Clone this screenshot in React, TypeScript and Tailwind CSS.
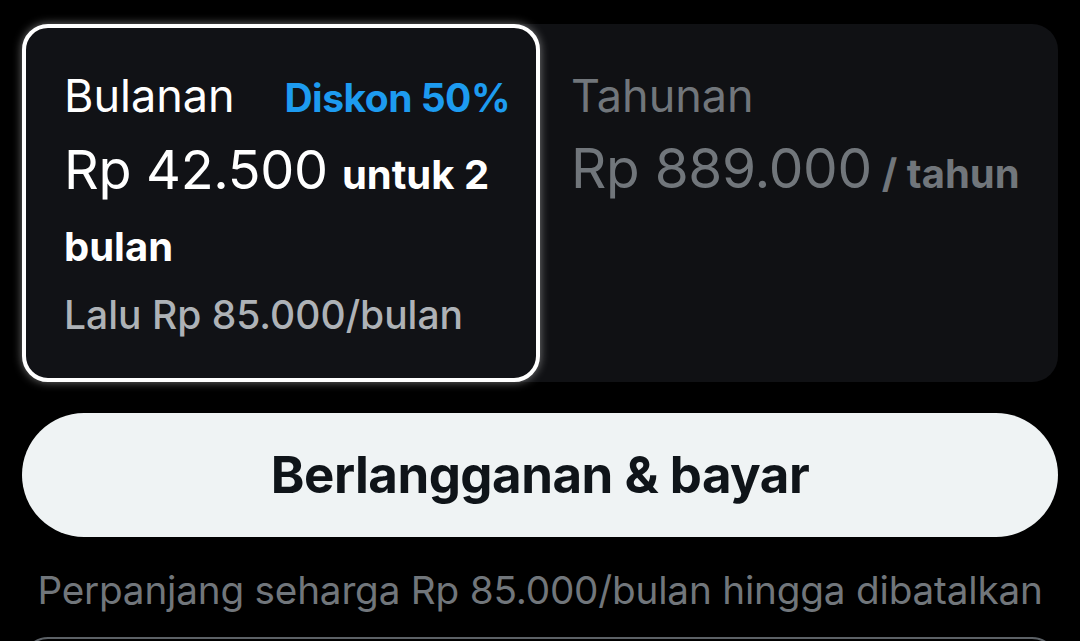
import React from "react";

export default function App() {
  return (
    <div className="w-[1080px] h-[641px] overflow-hidden bg-black px-[22px] pt-[24px]" style={{ fontFamily: "Inter, 'Noto Sans', sans-serif" }}>
      <div className="flex h-[358px] rounded-[26px] bg-[#101114]">
        <div className="w-[518px] h-full rounded-[26px] border-[4px] border-white bg-[#111216] shadow-[0_0_10px_rgba(255,255,255,0.45)] pl-[38px] pr-[26px] pt-[42px]">
          <div className="flex items-baseline justify-between">
            <span className="text-[45px] leading-[52px] text-white">Bulanan</span>
            <span className="text-[39px] leading-[52px] font-bold text-[#1d9bf0] tracking-[-0.5px]">Diskon 50%</span>
          </div>
          <div className="mt-[14px] text-white leading-[63px]">
            <span className="text-[54px] tracking-[-0.3px]">Rp 42.500</span>
            <span className="ml-[14px] text-[40px] font-bold">untuk 2 bulan</span>
          </div>
          <div className="mt-[6px] text-[39px] leading-[44px] font-medium text-[#aeb2b7]">Lalu Rp 85.000/bulan</div>
        </div>
        <div className="flex-1 h-full pl-[31px] pt-[46px]">
          <div className="text-[45px] leading-[52px] text-[#71767b]">Tahunan</div>
          <div className="mt-[12px] text-[#71767b] leading-[68px]">
            <span className="text-[55px] tracking-[-0.3px]">Rp 889.000</span>
            <span className="ml-[10px] text-[40px] font-bold">/ tahun</span>
          </div>
        </div>
      </div>
      <button className="mt-[31px] flex h-[124px] w-full items-center justify-center rounded-full bg-[#eff3f4]">
        <span className="text-[51px] font-bold text-[#0f1419] tracking-[-0.5px]">Berlangganan &amp; bayar</span>
      </button>
      <div className="mt-[30px] text-center text-[38.7px] leading-[46px] text-[#71767b] tracking-[-0.2px]">Perpanjang seharga Rp 85.000/bulan hingga dibatalkan</div>
      <div className="mt-[24px] h-[60px] rounded-[26px] border-2 border-[#5c6166]"></div>
    </div>
  );
}
